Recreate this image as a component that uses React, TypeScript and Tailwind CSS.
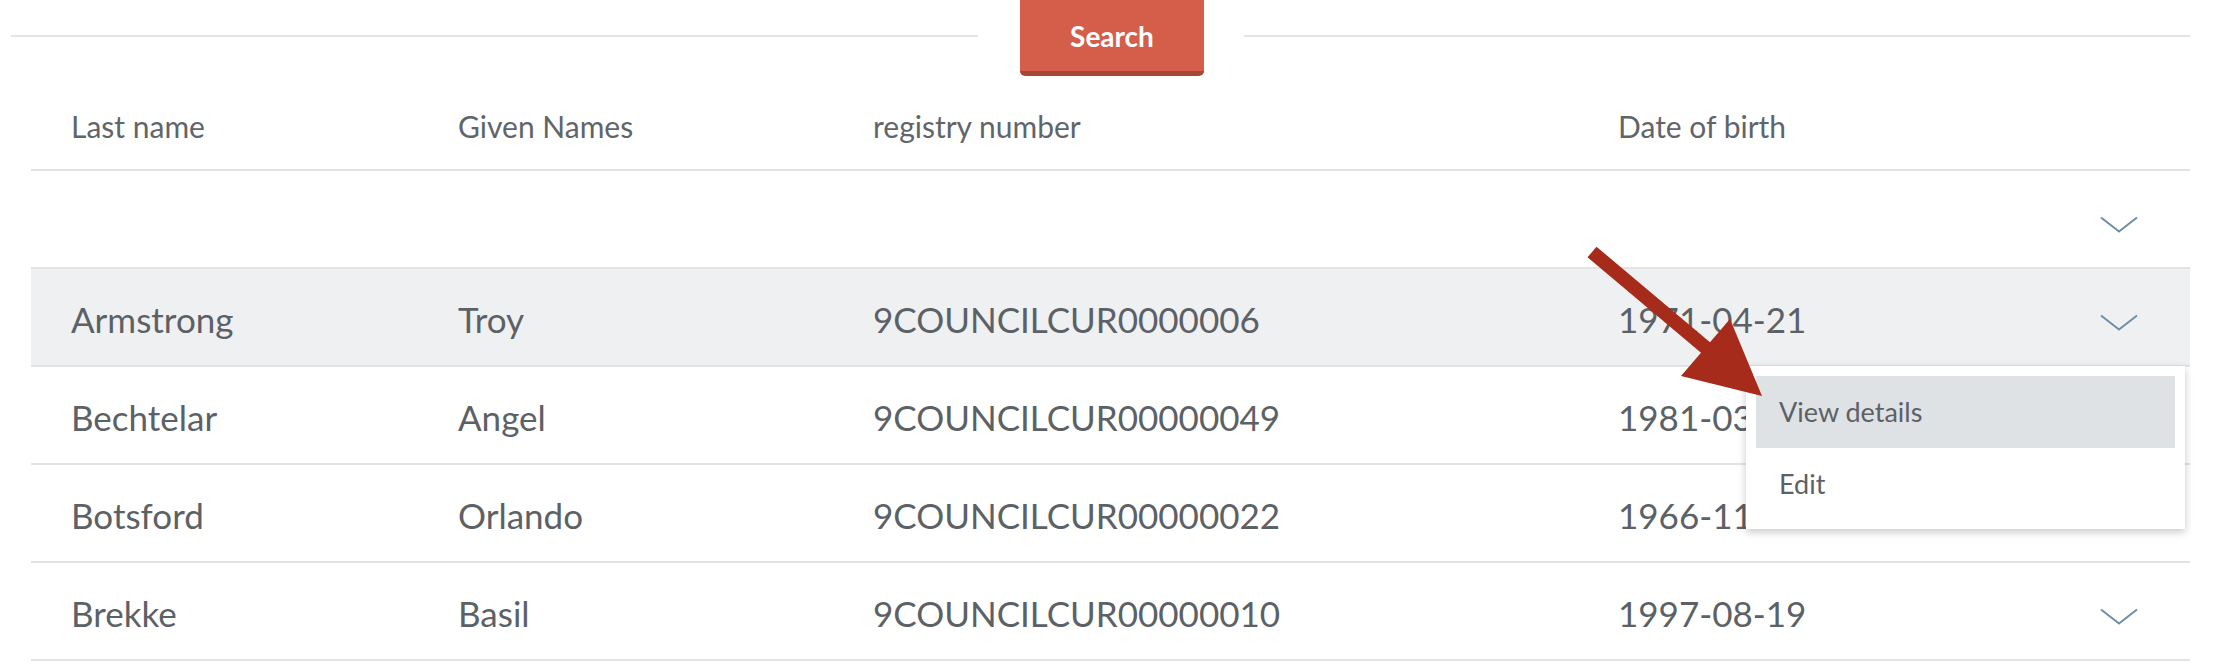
import React from "react";

const rows = [
  { last: "Armstrong", given: "Troy", reg: "9COUNCILCUR0000006", dob: "1971-04-21", active: true },
  { last: "Bechtelar", given: "Angel", reg: "9COUNCILCUR00000049", dob: "1981-03-17" },
  { last: "Botsford", given: "Orlando", reg: "9COUNCILCUR00000022", dob: "1966-11-05" },
  { last: "Brekke", given: "Basil", reg: "9COUNCILCUR00000010", dob: "1997-08-19" },
];

function Chevron() {
  return (
    <svg width="38" height="17" viewBox="0 0 38 17" className="block">
      <polyline points="1,1.5 19,15.5 37,1.5" fill="none" stroke="#6f8ea8" strokeWidth="2" />
    </svg>
  );
}

export default function App() {
  return (
    <div className="relative w-[2230px] h-[672px] overflow-hidden bg-white font-['Lato',_sans-serif] text-[#5c6166]">
      {/* top bar */}
      <div className="flex items-start h-[76px]">
        <div className="ml-[11px] w-[967px] mt-[35px] h-[2px] bg-[#e2e4e7]" />
        <button className="ml-[42px] w-[184px] h-[76px] bg-[#d45e4a] border-b-[5px] border-[#a84637] rounded-b-[5px] text-white text-[28px] font-bold flex items-center justify-center">
          Search
        </button>
        <div className="ml-[40px] mr-[40px] flex-1 mt-[35px] h-[2px] bg-[#e2e4e7]" />
      </div>

      <div className="ml-[31px] mr-[40px]">
        {/* header */}
        <div className="h-[95px] pt-[7px] border-b-2 border-[#e1e3e6] grid grid-cols-[387px_415px_745px_1fr] items-center pl-[40px] text-[30px] font-normal text-[#60656a]">
          <div>Last name</div>
          <div>Given Names</div>
          <div>registry number</div>
          <div>Date of birth</div>
        </div>
        {/* empty filter row */}
        <div className="h-[98px] border-b-2 border-[#e1e3e6] flex items-center justify-end pr-[52px] pt-[10px]">
          <Chevron />
        </div>
        {rows.map((r) => (
          <div
            key={r.reg}
            className={`h-[98px] border-b-2 border-[#e1e3e6] grid grid-cols-[387px_415px_745px_1fr_auto] items-center pl-[40px] pr-[52px] pt-[5px] text-[35px] ${r.active ? "bg-[#eef0f2]" : "bg-white"}`}
          >
            <div>{r.last}</div>
            <div>{r.given}</div>
            <div>{r.reg}</div>
            <div>{r.dob}</div>
            <div className="pt-[5px]">
              <Chevron />
            </div>
          </div>
        ))}
      </div>

      {/* dropdown menu */}
      <div className="absolute left-[1746px] top-[366px] w-[439px] h-[163px] bg-white p-[10px] shadow-[0_3px_8px_rgba(0,0,0,0.22)] text-[27px] text-[#5c6166]">
        <div className="h-[72px] bg-[#dfe2e5] flex items-center pl-[23px]">View details</div>
        <div className="h-[72px] flex items-center pl-[23px]">Edit</div>
      </div>

      {/* annotation arrow */}
      <svg className="absolute left-[1580px] top-[240px] pointer-events-none" width="190" height="165" viewBox="0 0 190 165">
        <polygon
          points="16.5,6.7 130,102.2 150,79 182,156 101,136 121,112.8 7.5,17.3"
          fill="#a62b1a"
        />
      </svg>
    </div>
  );
}
